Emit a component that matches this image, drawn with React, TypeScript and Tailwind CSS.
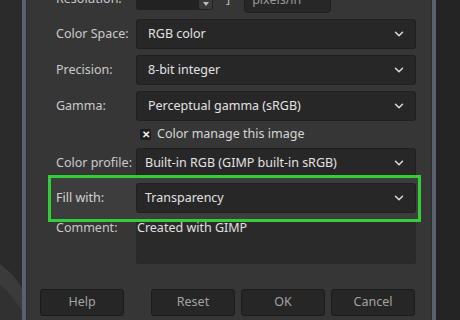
import { ChevronDown } from 'lucide-react';

const ROWS = [
  { label: 'Color Space:', value: 'RGB color' },
  { label: 'Precision:', value: '8-bit integer' },
  { label: 'Gamma:', value: 'Perceptual gamma (sRGB)' },
];

function Combo({ value, tight }: { value: string; tight?: boolean }) {
  return (
    <div
      className={`flex h-[30px] flex-1 items-center justify-between rounded-[3px] border border-[#1f1f1f] bg-[#272727] pr-[9px] text-[#e2e2e2] ${
        tight ? 'pl-[8px]' : 'pl-[11px]'
      }`}
    >
      <span>{value}</span>
      <ChevronDown className="h-[14px] w-[14px] text-[#dcdcdc]" strokeWidth={2.5} />
    </div>
  );
}

export default function App() {
  return (
    <div
      className="flex h-[320px] w-[460px] overflow-hidden bg-[#2a2a2a] text-[12.5px] leading-none"
      style={{ fontFamily: '"Noto Sans", "Open Sans", sans-serif' }}
    >
      {/* desktop strip with wave */}
      <div className="relative w-[22px] shrink-0 bg-[#2b2b2b]">
        <svg className="absolute left-0 top-[230px]" width="22" height="90" viewBox="0 0 22 90">
          <path d="M0 34 C8 40 16 48 22 58 L22 90 L0 90 Z" fill="#3b3b3b" />
          <path d="M0 54 C8 62 16 70 22 82 L22 90 L0 90 Z" fill="#313131" />
        </svg>
      </div>

      {/* dialog frame */}
      <div className="flex w-[414px] shrink-0 border-x-[4px] border-x-[#59626c] bg-[#363636]">
        <div className="flex flex-1 flex-col border-x border-x-[#2a2d30] pl-[29px] pr-[15px]">
          {/* resolution row (cut off) */}
          <div className="mt-[-12px] flex h-[22px] items-center text-[#c8c8c8]">
            <span className="w-[80px]">Resolution:</span>
            <div className="flex h-[22px] w-[77px] items-center justify-end rounded-[3px] bg-[#222222] pr-[1px]">
              <div className="flex h-[20px] w-[13px] items-end justify-center rounded-[2px] bg-[#3a3a3a] pb-[3px]">
                <div className="h-0 w-0 border-x-[3px] border-t-[4px] border-x-transparent border-t-[#bdbdbd]" />
              </div>
            </div>
            <span className="ml-[13px] text-[#bbbbbb]">]</span>
            <div className="ml-[14px] mt-[3px] flex h-[25px] w-[87px] items-center rounded-[4px] border border-[#1f1f1f] bg-[#272727] pl-[7px] text-[#9a9a9a]">
              pixels/in
            </div>
          </div>

          <div className="mt-[9px] flex flex-col gap-[6px]">
            {ROWS.map((r) => (
              <div key={r.label} className="flex items-center">
                <span className="w-[80px] text-[#cbcbcb]">{r.label}</span>
                <Combo value={r.value} />
              </div>
            ))}
          </div>

          <div className="mt-[3px] flex h-[20px] items-center pl-[84px] text-[#d6d6d6]">
            <div className="mr-[6px] flex h-[11px] w-[11px] items-center justify-center rounded-[2px] bg-[#1e1e1e] text-[10px] font-bold text-[#f2f2f2]">
              ✕
            </div>
            <span>Color manage this image</span>
          </div>

          <div className="mt-[4px] flex items-center">
            <span className="w-[80px] text-[#cbcbcb]">Color profile:</span>
            <Combo value="Built-in RGB (GIMP built-in sRGB)" tight />
          </div>

          {/* highlighted row */}
          <div className="relative mt-[5px] flex items-center">
            <div className="absolute bottom-[-9px] left-[-8px] right-[-5px] top-[-8px] border-[3px] border-[#33cd37] bg-[#3d3d3d]" />
            <span className="relative w-[80px] text-[#d4d4d4]">Fill with:</span>
            <div className="relative flex flex-1">
              <Combo value="Transparency" tight />
            </div>
          </div>

          <div className="mt-[4px] flex items-start">
            <span className="mt-[5px] w-[80px] text-[#c8c8c8]">Comment:</span>
            <div className="h-[47px] flex-1 rounded-[3px] bg-[#2a2a2a] pl-[1px] pt-[5px] text-[#e0e0e0]">
              Created with GIMP
            </div>
          </div>

          <div className="mt-[25px] flex gap-[6px] text-[#a3a3a3]">
            <button className="mr-[21px] ml-[-16px] h-[27px] w-[84px] rounded-[3px] border border-[#1b1b1b] bg-[#262626]">
              Help
            </button>
            <button className="h-[27px] w-[84px] rounded-[3px] border border-[#1b1b1b] bg-[#262626]">Reset</button>
            <button className="h-[27px] w-[84px] rounded-[3px] border border-[#1b1b1b] bg-[#262626]">OK</button>
            <button className="h-[27px] w-[84px] rounded-[3px] border border-[#1b1b1b] bg-[#262626]">Cancel</button>
          </div>
        </div>
      </div>

      <div className="flex-1 bg-[#242424]" />
    </div>
  );
}
